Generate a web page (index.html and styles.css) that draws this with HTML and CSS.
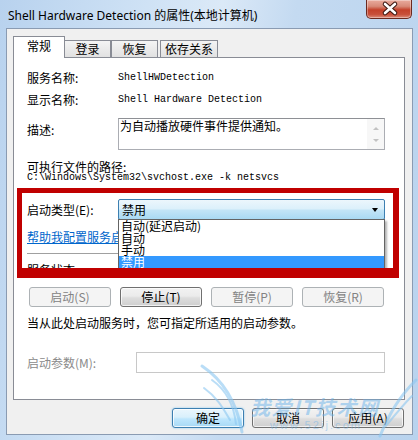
FILE: index.html
```html
<!DOCTYPE html>
<html>
<head>
<meta charset="utf-8">
<link rel="stylesheet" href="styles.css">
</head>
<body>
<div class="window">
  <div class="titlebar">
    <span class="title">Shell Hardware Detection 的属性(本地计算机)</span>
    <div class="close">
      <svg width="46" height="19" viewBox="0 0 46 19">
        <path d="M18 5 L28 14 M28 5 L18 14" stroke="#3a1610" stroke-width="4.6" stroke-linecap="round"/>
        <path d="M18 5 L28 14 M28 5 L18 14" stroke="#ffffff" stroke-width="2.6" stroke-linecap="round"/>
      </svg>
    </div>
  </div>
  <div class="client">
    <div class="tabs">
      <div class="tab active">常规</div>
      <div class="tab t2">登录</div>
      <div class="tab t3">恢复</div>
      <div class="tab t4">依存关系</div>
    </div>
    <div class="panel">
      <div class="row line">
        <span class="lbl">服务名称:</span><span class="mono">ShellHWDetection</span>
      </div>
      <div class="row line r2">
        <span class="lbl">显示名称:</span><span class="mono">Shell Hardware Detection</span>
      </div>
      <div class="row desc">
        <span class="lbl desclbl">描述:</span>
        <div class="textarea">
          <span class="tatext">为自动播放硬件事件提供通知。</span>
          <div class="vscroll"><span class="up"></span><span class="down"></span></div>
        </div>
      </div>
      <div class="pathlbl">可执行文件的路径:</div>
      <div class="path mono">C:\Windows\System32\svchost.exe -k netsvcs</div>
      <div class="row starttype">
        <span class="lbl">启动类型(E):</span>
        <div class="combo"><span>禁用</span><span class="arrow"></span></div>
      </div>
      <a class="link" href="#">帮助我配置服务启动选项。</a>
      <div class="sep"></div>
      <div class="row line status">
        <span class="lbl">服务状态:</span><span>已启动</span>
      </div>
      <div class="btnrow">
        <div class="btn disabled">启动(S)</div>
        <div class="btn">停止(T)</div>
        <div class="btn disabled">暂停(P)</div>
        <div class="btn disabled">恢复(R)</div>
      </div>
      <div class="hint">当从此处启动服务时，您可指定所适用的启动参数。</div>
      <div class="row params">
        <span class="lbl plbl">启动参数(M):</span>
        <div class="input"></div>
      </div>
    </div>
    <div class="footer">
      <div class="btn fbtn default">确定</div>
      <div class="btn fbtn">取消</div>
      <div class="btn fbtn">应用(A)</div>
    </div>
  </div>

  <div class="droplist">
    <div class="item">自动(延迟启动)</div>
    <div class="item">自动</div>
    <div class="item">手动</div>
    <div class="item sel">禁用</div>
  </div>
  <div class="redbox"></div>

  <svg class="watermark" width="228" height="80" viewBox="0 0 228 80">
    <g fill="none" stroke="#8cc8f2" stroke-linecap="round" opacity="0.6">
      <path d="M12 6 C 30 18, 46 38, 52 72" stroke-width="3"/>
      <path d="M22 20 C 36 30, 44 46, 46 64" stroke-width="2"/>
      <path d="M14 28 C 28 38, 34 50, 40 60" stroke-width="2"/>
      <path d="M226 20 C 210 36, 200 52, 190 76" stroke-width="3"/>
      <path d="M222 36 C 212 46, 204 56, 196 66" stroke-width="2"/>
    </g>
    <text x="60" y="55" font-family="Noto Sans CJK SC, sans-serif" font-size="20" font-weight="bold" font-style="italic" fill="#6ab2ea" fill-opacity="0.5" textLength="128">我爱IT技术网</text>
    <text x="80" y="69" font-family="Liberation Sans, sans-serif" font-size="11" fill="#6ab2ea" fill-opacity="0.45" textLength="90">www.52ij.com</text>
  </svg>
</div>
</body>
</html>
```

FILE: styles.css
```css
* { box-sizing: border-box; }
html, body { margin: 0; padding: 0; }
body {
  width: 418px;
  height: 440px;
  overflow: hidden;
  font-family: "Noto Sans CJK SC", "Noto Sans", sans-serif;
  font-size: 12px;
  color: #000;
  background: #c3d9f0;
}
.window {
  position: relative;
  width: 418px;
  height: 440px;
  display: flex;
  flex-direction: column;
  padding: 0 5px 5px 6px;
  background: linear-gradient(100deg, #b8d2ee 0%, #cfe2f5 30%, #dbe9f7 45%, #c4daf1 60%, #b9d3ee 100%);
}
.titlebar {
  height: 28px;
  flex: none;
  display: flex;
  justify-content: space-between;
  align-items: flex-start;
  padding-left: 2px;
}
.title {
  margin-top: 8px;
  font-family: "Noto Sans", "Noto Sans CJK SC", sans-serif;
  font-size: 12px;
  line-height: 16px;
  color: #000;
  white-space: nowrap;
}
.close {
  width: 46px;
  height: 19px;
  margin-right: 1px;
  border: 1px solid #6b2a20;
  border-top: none;
  border-radius: 0 0 5px 5px;
  background: linear-gradient(#e9ab9d 0%, #d88a78 35%, #c4412a 55%, #c8503a 80%, #dc8c7a 100%);
  box-shadow: inset 0 0 0 1px rgba(255,255,255,0.35);
}
.close svg { display: block; margin-top: -1px; }

.client {
  flex: 1;
  display: flex;
  flex-direction: column;
  border: 1px solid #8a9bb2;
  background: #f0f0f0;
  padding: 7px 0 0 6px;
}
.tabs {
  height: 21px;
  display: flex;
  align-items: flex-end;
  position: relative;
  z-index: 2;
}
.tab {
  height: 17px;
  width: 47px;
  border: 1px solid #898c95;
  border-bottom: none;
  background: linear-gradient(#f4f4f4, #e1e1e1);
  text-align: center;
  line-height: 15px;
}
.tab.active {
  width: 52px;
  height: 22px;
  margin-bottom: -1px;
  margin-right: -1px;
  background: #ffffff;
  line-height: 18px;
}
.tab.t4 { margin-left: 2px; width: 58px; }

.panel {
  height: 343px;
  margin-right: 7px;
  border: 1px solid #898c95;
  background: #ffffff;
  padding: 12px 0 0 13px;
  display: flex;
  flex-direction: column;
  align-items: flex-start;
}
.row { display: flex; align-items: center; }
.line { height: 16px; line-height: 16px; }
.r2 { margin-top: 6px; }
.lbl { width: 91px; flex: none; }
.mono {
  font-family: "Liberation Mono", monospace;
  font-size: 10px;
}
.desc { margin-top: 10px; align-items: flex-start; }
.desclbl { margin-top: 4px; line-height: 16px; }
.textarea {
  width: 267px;
  height: 32px;
  border: 1px solid #abadb3;
  border-top-color: #8e9095;
  display: flex;
  justify-content: space-between;
  background: #fff;
}
.tatext { padding-left: 1px; line-height: 14px; }
.vscroll {
  width: 17px;
  height: 100%;
  background: #f7f7f7;
  display: flex;
  flex-direction: column;
  align-items: center;
  justify-content: space-between;
  padding: 8px 0 7px;
}
.up, .down { width: 0; height: 0; border-left: 3px solid transparent; border-right: 3px solid transparent; }
.up { border-bottom: 3px solid #c2c2c2; }
.down { border-top: 3px solid #c2c2c2; }

.pathlbl { margin-top: 9px; line-height: 16px; }
.path { margin-top: -3px; line-height: 12px; white-space: pre; }

.starttype { margin-top: 15px; height: 21px; }
.combo {
  width: 267px;
  height: 21px;
  border: 1px solid #3c7fb1;
  border-radius: 2px;
  background: linear-gradient(#ecf6fc 0%, #dcf0fb 45%, #c2e4f6 55%, #a9d9f2 100%);
  display: flex;
  align-items: center;
  justify-content: space-between;
  padding: 0 6px 0 3px;
  line-height: 16px;
}
.arrow {
  width: 0; height: 0;
  border-left: 3.5px solid transparent;
  border-right: 3.5px solid transparent;
  border-top: 4px solid #000;
  margin-top: 1px;
}
.link {
  margin-top: 9px;
  line-height: 16px;
  color: #0066cc;
  text-decoration: underline;
}
.sep {
  margin-top: 8px;
  width: 357px;
  height: 2px;
  border-top: 1px solid #a0a0a0;
  border-bottom: 1px solid #ffffff;
}
.status { margin-top: 7px; }

.btnrow {
  margin-top: 9px;
  margin-left: 2px;
  display: flex;
  gap: 9px;
}
.btn {
  width: 82px;
  height: 20px;
  border: 1px solid #707070;
  border-radius: 3px;
  background: linear-gradient(#f2f2f2 0%, #ebebeb 45%, #dddddd 55%, #cfcfcf 100%);
  box-shadow: inset 0 0 0 1px rgba(255,255,255,0.7);
  text-align: center;
  line-height: 17px;
}
.btn.disabled {
  border-color: #adb2b5;
  background: #f4f4f4;
  color: #838383;
  box-shadow: none;
}
.hint { margin-top: 8px; line-height: 16px; }
.params { margin-top: 21px; height: 21px; }
.plbl { width: 109px; color: #8a8a8a; }
.input {
  width: 249px;
  height: 21px;
  border: 1px solid #c8c8c8;
  background: #fff;
}

.footer {
  margin-top: 8px;
  padding-right: 8px;
  display: flex;
  justify-content: flex-end;
  gap: 8px;
}
.fbtn { width: 72px; height: 20px; }
.fbtn.default {
  border-color: #3c7fb1;
  background: linear-gradient(#eaf6fd 0%, #d9f0fc 45%, #bee6fd 55%, #a7d9f5 100%);
  box-shadow: inset 0 0 0 1px rgba(255,255,255,0.8), 0 0 2px #7ec4f0;
}

.droplist {
  position: absolute;
  left: 118px;
  top: 219px;
  width: 267px;
  height: 50px;
  border: 1px solid #646464;
  background: #fff;
  box-shadow: 2px 2px 2px rgba(0,0,0,0.3);
  z-index: 5;
}
.item { height: 12px; line-height: 12px; padding-left: 2px; }
.item.sel { background: #3399ff; color: #fff; }

.redbox {
  position: absolute;
  left: 17px;
  top: 188px;
  width: 382px;
  height: 90px;
  border-style: solid;
  border-color: #c00000;
  border-width: 5px 6px 10px 5px;
  z-index: 6;
}
.watermark {
  position: absolute;
  left: 190px;
  top: 360px;
  z-index: 7;
  pointer-events: none;
}
```
